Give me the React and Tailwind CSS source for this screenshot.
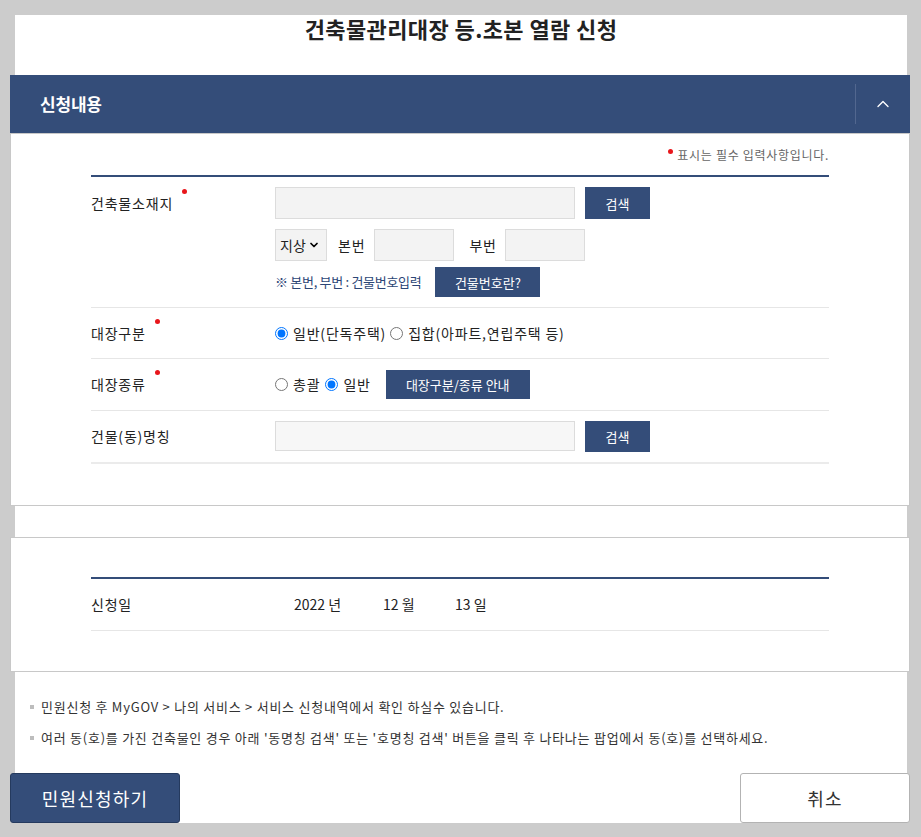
import { ChevronUp, ChevronDown } from "lucide-react";

// ─── Shared bits ─────────────────────────────────────────────────────────────
const RequiredDot = () => (
  <span className="inline-block align-top relative -top-[4px] ml-[9px] w-[5px] h-[5px] rounded-full bg-[#e8161b]" />
);

const NavyButton = ({ children, className = "" }) => (
  <button
    type="button"
    className={`bg-[#344d79] text-white text-[13px] leading-none tracking-normal flex items-center justify-center shrink-0 ${className}`}
  >
    {children}
  </button>
);

const TextBox = ({ className = "" }) => (
  <div className={`bg-[#f3f3f3] border border-[#dcdcdc] shrink-0 ${className}`} />
);

const Radio = ({ checked, label }) => (
  <label className="flex items-center gap-[5px]">
    <input type="radio" defaultChecked={checked} className="m-0 w-[13px] h-[13px]" />
    <span>{label}</span>
  </label>
);

// ─── Form row ────────────────────────────────────────────────────────────────
const Row = ({ label, required, className = "", children }) => (
  <div className={`flex ${className}`}>
    <div className="w-[184px] shrink-0 flex items-center h-[32px] text-[14px] leading-[20px] text-[#222]">
      <span>
        {label}
        {required && <RequiredDot />}
      </span>
    </div>
    <div className="flex-1">{children}</div>
  </div>
);

export default function App() {
  return (
    <div className="w-full min-h-[837px] bg-[#cccccc] pt-[15px] font-['Noto_Sans_CJK_KR','Noto_Sans',sans-serif] text-[#222]">
      <div className="ml-[15px] w-[892px] bg-white">
        {/* ── Title ── */}
        <h1 className="h-[60px] text-center text-[22px] font-bold tracking-[0.4px] leading-[26px] text-[#222]">
          건축물관리대장 등.초본 열람 신청
        </h1>

        <div className="-ml-[5px] w-[900px]">
          {/* ── Header bar ── */}
          <div className="h-[58px] bg-[#344d79] flex items-center">
            <h2 className="flex-1 pl-[30px] text-white text-[17px] font-bold tracking-[-0.2px]">신청내용</h2>
            <div className="w-[55px] h-[40px] border-l border-[#52678f] flex items-center justify-center">
              <ChevronUp size={20} strokeWidth={1.6} className="text-white" />
            </div>
          </div>

          {/* ── Box 1 ── */}
          <section className="border border-[#c8c8c8] bg-white px-[80px] pb-[41px] tracking-[0.8px]">
            <p className="pt-[12px] text-right text-[12px] leading-[18px] text-[#666] tracking-[0.7px]">
              <span className="inline-block relative -top-[6px] mr-[4px] w-[5px] h-[5px] rounded-full bg-[#e8161b]" />
              표시는 필수 입력사항입니다.
            </p>
            <div className="mt-[11px] border-t-2 border-[#344d79]" />

            {/* 건축물소재지 */}
            <Row label="건축물소재지" required className="pt-[10px] pb-[10px] border-b border-[#e6e6e6]">
              <div className="flex gap-[10px]">
                <TextBox className="w-[300px] h-[32px]" />
                <NavyButton className="w-[65px] h-[32px]">검색</NavyButton>
              </div>
              <div className="flex items-center mt-[10px] text-[14px]">
                <div className="w-[52px] h-[32px] bg-[#f3f3f3] border border-[#dcdcdc] flex items-center pl-[4px] gap-[2px] tracking-normal">
                  <span>지상</span>
                  <ChevronDown size={12} strokeWidth={3.5} className="text-black" />
                </div>
                <span className="ml-[11px]">본번</span>
                <TextBox className="ml-[9px] w-[80px] h-[32px]" />
                <span className="ml-[15px]">부번</span>
                <TextBox className="ml-[8px] w-[80px] h-[32px]" />
              </div>
              <div className="flex items-center mt-[6px]">
                <span className="text-[13px] text-[#2c4676] tracking-[-0.3px]">※ 본번, 부번 : 건물번호입력</span>
                <NavyButton className="ml-[14px] w-[105px] h-[30px]">건물번호란?</NavyButton>
              </div>
            </Row>

            {/* 대장구분 */}
            <div className="flex items-center h-[51px] border-b border-[#e6e6e6] text-[14px]">
              <div className="w-[184px] shrink-0">
                대장구분
                <RequiredDot />
              </div>
              <div className="flex items-center gap-[4px]">
                <Radio checked label="일반(단독주택)" />
                <Radio label="집합(아파트,연립주택 등)" />
              </div>
            </div>

            {/* 대장종류 */}
            <div className="flex items-center h-[52px] border-b border-[#e6e6e6] text-[14px]">
              <div className="w-[184px] shrink-0">
                대장종류
                <RequiredDot />
              </div>
              <div className="flex items-center gap-[5px]">
                <Radio label="총괄" />
                <Radio checked label="일반" />
                <NavyButton className="ml-[10px] w-[144px] h-[29px]">대장구분/종류 안내</NavyButton>
              </div>
            </div>

            {/* 건물(동)명칭 */}
            <div className="flex items-center h-[53px] border-b-2 border-[#ebebeb] text-[14px]">
              <div className="w-[184px] shrink-0">건물(동)명칭</div>
              <div className="flex gap-[10px]">
                <TextBox className="w-[300px] h-[30px] bg-[#f7f7f7]" />
                <NavyButton className="w-[65px] h-[31px]">검색</NavyButton>
              </div>
            </div>
          </section>

          {/* ── Box 2 ── */}
          <section className="mt-[31px] border border-[#c8c8c8] bg-white px-[80px] pt-[39px] pb-[40px] tracking-[0.8px]">
            <div className="border-t-2 border-[#344d79]" />
            <div className="flex items-center h-[52px] border-b border-[#e6e6e6] text-[14px]">
              <div className="w-[184px] shrink-0">신청일</div>
              <div className="pl-[19px] flex tracking-normal">
                <span className="w-[89px]">2022 년</span>
                <span className="w-[72px]">12 월</span>
                <span>13 일</span>
              </div>
            </div>
          </section>

          {/* ── Notes ── */}
          <ul className="pt-[25px] pl-[20px] text-[13px] leading-[20px] text-[#333] tracking-[0.75px]">
            <li className="flex items-center gap-[7px]">
              <span className="w-[4px] h-[4px] bg-[#bdbdbd]" />
              민원신청 후 MyGOV &gt; 나의 서비스 &gt; 서비스 신청내역에서 확인 하실수 있습니다.
            </li>
            <li className="mt-[11px] flex items-center gap-[7px]">
              <span className="w-[4px] h-[4px] bg-[#bdbdbd]" />
              여러 동(호)를 가진 건축물인 경우 아래 '동명칭 검색' 또는 '호명칭 검색' 버튼을 클릭 후 나타나는 팝업에서 동(호)를 선택하세요.
            </li>
          </ul>

          {/* ── Footer buttons ── */}
          <div className="mt-[25px] flex justify-between">
            <button
              type="button"
              className="w-[170px] h-[50px] rounded-[3px] bg-[#344d79] border border-[#253a5e] text-white text-[18px] tracking-[1.2px]"
            >
              민원신청하기
            </button>
            <button
              type="button"
              className="w-[170px] h-[50px] rounded-[3px] bg-white border border-[#b3b3b3] text-[#333] text-[18px] tracking-[1.2px]"
            >
              취소
            </button>
          </div>
        </div>
      </div>
    </div>
  );
}
